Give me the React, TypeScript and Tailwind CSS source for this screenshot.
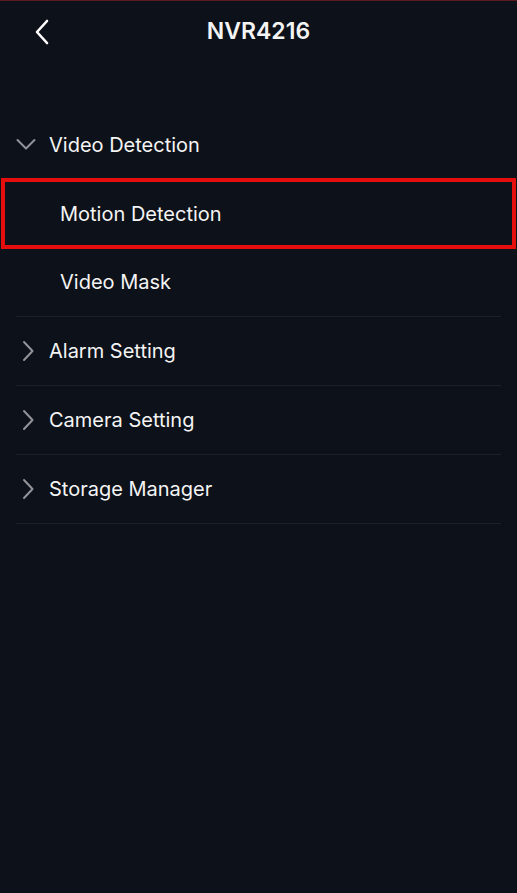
type Item = { label: string; sub?: boolean; open?: boolean; marked?: boolean };

const items: Item[] = [
  { label: "Video Detection", open: true },
  { label: "Motion Detection", sub: true, marked: true },
  { label: "Video Mask", sub: true },
  { label: "Alarm Setting" },
  { label: "Camera Setting" },
  { label: "Storage Manager" },
];

function Chevron({ open }: { open?: boolean }) {
  return (
    <svg width="24" height="24" viewBox="0 0 24 24" fill="none" className="shrink-0">
      <path
        d={open ? "M1.5 7L10 15.5L18.5 7" : "M8 3L16.5 12L8 21"}
        stroke="#92949a"
        strokeWidth="2"
        strokeLinecap="round"
        strokeLinejoin="round"
      />
    </svg>
  );
}

export default function App() {
  return (
    <div
      className="w-[517px] h-[893px] bg-[#0d1119] border-t border-[#5c1a22] text-[#f4f4f4] overflow-hidden"
      style={{ fontFamily: "Inter, 'Noto Sans', sans-serif" }}
    >
      <header className="h-[61px] flex items-center relative">
        <button className="absolute left-[33px] top-[17px]">
          <svg width="18" height="28" viewBox="0 0 18 28" fill="none">
            <path
              d="M14 3L4 14L14 25"
              stroke="#ffffff"
              strokeWidth="2.6"
              strokeLinecap="round"
              strokeLinejoin="round"
            />
          </svg>
        </button>
        <h1 className="w-full text-center text-[23px] font-semibold">NVR4216</h1>
      </header>

      <ul className="mx-4 pt-[48px]">
        {items.map((it, i) => (
          <li
            key={it.label}
            className={`relative h-[69px] flex items-center ${
              i >= 2 ? "border-b border-[#1c2029]" : ""
            }`}
          >
            {it.sub ? (
              <span className="pl-[44px] text-[20px]">{it.label}</span>
            ) : (
              <div className="flex items-center gap-[9px]">
                <Chevron open={it.open} />
                <span className="text-[20px]">{it.label}</span>
              </div>
            )}
            {it.marked && (
              <div className="absolute -left-[15px] -right-[15px] -top-[1px] -bottom-[1px] border-4 border-[#e60d0d] pointer-events-none" />
            )}
          </li>
        ))}
      </ul>
    </div>
  );
}
